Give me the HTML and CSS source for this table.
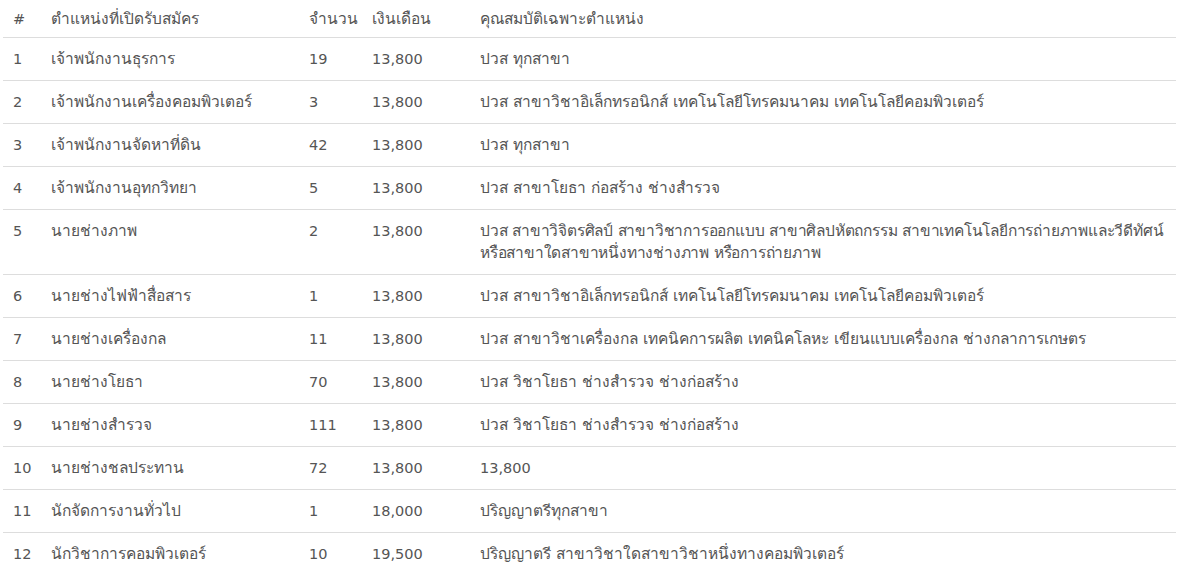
FILE: index.html
```html
<!DOCTYPE html>
<html lang="th">
<head>
<meta charset="utf-8">
<link rel="stylesheet" href="styles.css">
</head>
<body>
<table class="jobs">
  <colgroup>
    <col class="c-no"><col class="c-pos"><col class="c-num"><col class="c-sal"><col class="c-qual">
  </colgroup>
  <thead>
    <tr><th class="num">#</th><th>ตำแหน่งที่เปิดรับสมัคร</th><th>จำนวน</th><th>เงินเดือน</th><th>คุณสมบัติเฉพาะตำแหน่ง</th></tr>
  </thead>
  <tbody>
    <tr><td>1</td><td>เจ้าพนักงานธุรการ</td><td>19</td><td>13,800</td><td>ปวส ทุกสาขา</td></tr>
    <tr><td>2</td><td>เจ้าพนักงานเครื่องคอมพิวเตอร์</td><td>3</td><td>13,800</td><td>ปวส สาขาวิชาอิเล็กทรอนิกส์ เทคโนโลยีโทรคมนาคม เทคโนโลยีคอมพิวเตอร์</td></tr>
    <tr><td>3</td><td>เจ้าพนักงานจัดหาที่ดิน</td><td>42</td><td>13,800</td><td>ปวส ทุกสาขา</td></tr>
    <tr><td>4</td><td>เจ้าพนักงานอุทกวิทยา</td><td>5</td><td>13,800</td><td>ปวส สาขาโยธา ก่อสร้าง ช่างสำรวจ</td></tr>
    <tr><td>5</td><td>นายช่างภาพ</td><td>2</td><td>13,800</td><td class="two-line">ปวส สาขาวิจิตรศิลป์ สาขาวิชาการออกแบบ สาขาศิลปหัตถกรรม สาขาเทคโนโลยีการถ่ายภาพและวีดีทัศน์<br>หรือสาขาใดสาขาหนึ่งทางช่างภาพ หรือการถ่ายภาพ</td></tr>
    <tr><td>6</td><td>นายช่างไฟฟ้าสื่อสาร</td><td>1</td><td>13,800</td><td>ปวส สาขาวิชาอิเล็กทรอนิกส์ เทคโนโลยีโทรคมนาคม เทคโนโลยีคอมพิวเตอร์</td></tr>
    <tr><td>7</td><td>นายช่างเครื่องกล</td><td>11</td><td>13,800</td><td>ปวส สาขาวิชาเครื่องกล เทคนิคการผลิต เทคนิคโลหะ เขียนแบบเครื่องกล ช่างกลาการเกษตร</td></tr>
    <tr><td>8</td><td>นายช่างโยธา</td><td>70</td><td>13,800</td><td>ปวส วิชาโยธา ช่างสำรวจ ช่างก่อสร้าง</td></tr>
    <tr><td>9</td><td>นายช่างสำรวจ</td><td>111</td><td>13,800</td><td>ปวส วิชาโยธา ช่างสำรวจ ช่างก่อสร้าง</td></tr>
    <tr><td>10</td><td>นายช่างชลประทาน</td><td>72</td><td>13,800</td><td class="num">13,800</td></tr>
    <tr><td>11</td><td>นักจัดการงานทั่วไป</td><td>1</td><td>18,000</td><td>ปริญญาตรีทุกสาขา</td></tr>
    <tr><td>12</td><td>นักวิชาการคอมพิวเตอร์</td><td>10</td><td>19,500</td><td>ปริญญาตรี สาขาวิชาใดสาขาวิชาหนึ่งทางคอมพิวเตอร์</td></tr>
  </tbody>
</table>
</body>
</html>
```

FILE: styles.css
```css
html, body {
  margin: 0;
  padding: 0;
  background: #fff;
}
body {
  font-family: "DejaVu Sans", "Noto Sans", sans-serif;
  font-size: 14.5px;
  color: #555;
}
.jobs {
  margin-left: 3px;
  width: 1173px;
  border-collapse: collapse;
  table-layout: fixed;
}
.c-no { width: 38px; }
.c-pos { width: 258px; }
.c-num { width: 63px; }
.c-sal { width: 108px; }
.c-qual { width: auto; }
.jobs th,
.jobs td {
  text-align: left;
  font-weight: normal;
  vertical-align: top;
  line-height: 22px;
  padding: 10px 6px 10px 10px;
}
/* Thai text columns: the Thai fallback face runs narrower than the reference */
.jobs th,
.jobs td:nth-child(2),
.jobs td:nth-child(5) {
  font-size: 15.5px;
}
.jobs th.num,
.jobs td.num {
  font-size: 14.5px;
}
.jobs td.two-line {
  white-space: nowrap;
  letter-spacing: -0.2px;
}
.jobs th {
  padding-top: 8px;
  padding-bottom: 7px;
  border-bottom: 1px solid #ddd;
}
.jobs td {
  border-bottom: 1px solid #ddd;
}
.jobs tbody tr:last-child td {
  border-bottom: none;
}
```
